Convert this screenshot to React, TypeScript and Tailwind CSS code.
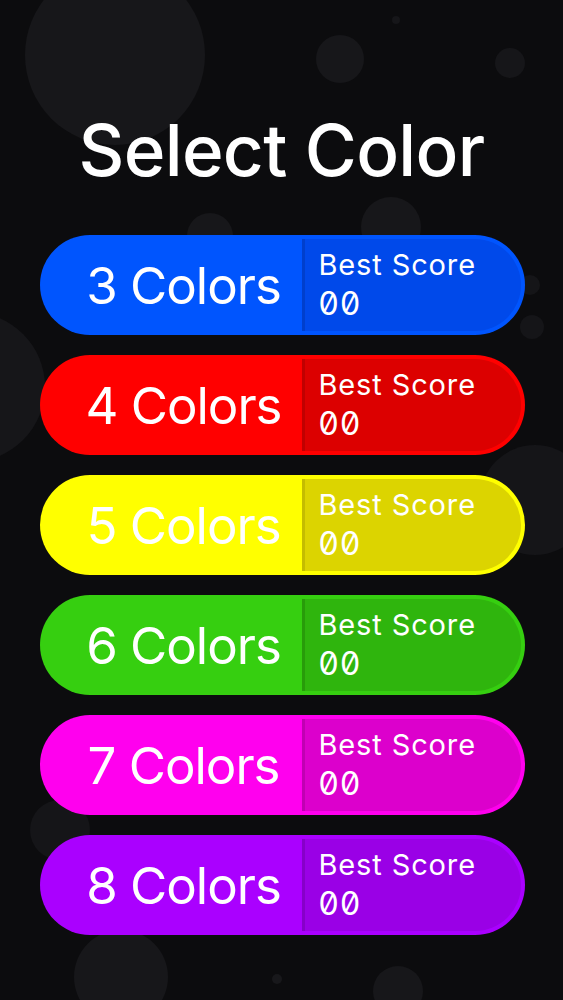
import React from 'react';

type Mode = {
  count: number;
  main: string;
  panel: string;
  edge: string;
};

const modes: Mode[] = [
  { count: 3, main: 'bg-[#0055fe]', panel: 'bg-[#0049ea]', edge: 'border-[#003fcc]' },
  { count: 4, main: 'bg-[#ff0000]', panel: 'bg-[#dc0000]', edge: 'border-[#c00000]' },
  { count: 5, main: 'bg-[#ffff00]', panel: 'bg-[#dcd400]', edge: 'border-[#c4bc00]' },
  { count: 6, main: 'bg-[#36cf10]', panel: 'bg-[#2fb50d]', edge: 'border-[#289c0a]' },
  { count: 7, main: 'bg-[#ff00ee]', panel: 'bg-[#dc00cc]', edge: 'border-[#c000b2]' },
  { count: 8, main: 'bg-[#aa00ff]', panel: 'bg-[#9a00e6]', edge: 'border-[#8600c8]' },
];

// faint bubbles floating behind the menu: [cx, cy, r, fill]
const bubbles: [number, number, number, string][] = [
  [115, 55, 90, '#17171a'],
  [340, 59, 24, '#17171a'],
  [510, 63, 15, '#161619'],
  [396, 20, 4, '#161619'],
  [210, 236, 23, '#17171a'],
  [391, 227, 30, '#17171a'],
  [-30, 387, 75, '#161619'],
  [530, 285, 10, '#151518'],
  [532, 327, 12, '#151518'],
  [535, 500, 55, '#151518'],
  [60, 830, 30, '#151518'],
  [121, 977, 47, '#17171a'],
  [398, 991, 25, '#17171a'],
  [277, 979, 5, '#18181b'],
];

function ModeButton({ mode }: { mode: Mode }) {
  return (
    <button className={`flex h-[100px] w-[485px] items-stretch rounded-full ${mode.main} text-white`}>
      <span className="flex w-[262px] shrink-0 items-center justify-center pl-[26px] text-[51px] leading-none tracking-[-0.02em]">
        {mode.count} Colors
      </span>
      <span
        className={`my-[4px] mr-[4px] flex flex-1 flex-col items-start justify-center rounded-r-full border-l-[3px] ${mode.edge} ${mode.panel} pl-[14px] text-left`}
      >
        <span className="text-[29px] leading-[38px] tracking-[0.03em]">Best Score</span>
        <span className="slashed-zero text-[32px] leading-[40px] tracking-[0.04em]">00</span>
      </span>
    </button>
  );
}

export default function App() {
  return (
    <div className="relative min-h-screen w-full overflow-hidden bg-[#0c0c0e] font-['Inter',sans-serif]">
      <svg className="absolute inset-0 h-full w-full" viewBox="0 0 563 1000" preserveAspectRatio="xMinYMin slice">
        {bubbles.map(([cx, cy, r, fill], i) => (
          <circle key={i} cx={cx} cy={cy} r={r} fill={fill} />
        ))}
      </svg>

      <div className="relative flex flex-col items-center pt-[115px]">
        <h1 className="text-[71px] font-medium leading-none tracking-[-0.01em] text-white">Select Color</h1>
        <div className="mt-[49px] flex flex-col items-center gap-[20px] pl-[1px]">
          {modes.map((m) => (
            <ModeButton key={m.count} mode={m} />
          ))}
        </div>
      </div>
    </div>
  );
}
